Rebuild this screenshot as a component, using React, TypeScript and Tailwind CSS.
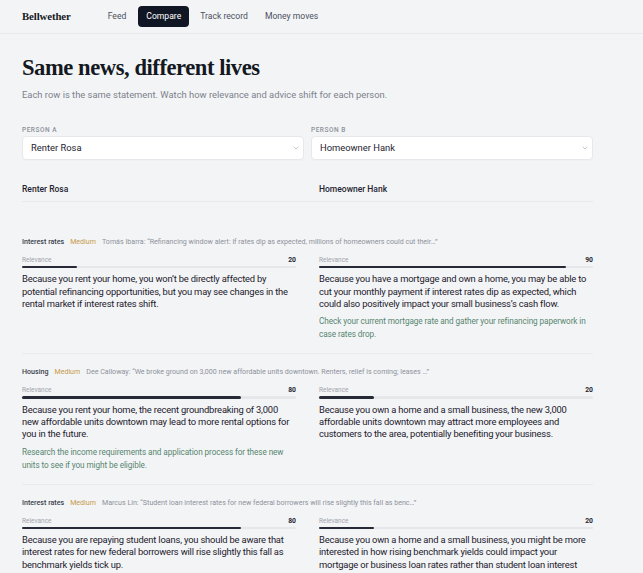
import React from "react";
import { ChevronDown } from "lucide-react";

type Side = { score: number; text: string; advice?: string };
type Row = { topic: string; level: string; quote: string; a: Side; b: Side };

const rows: Row[] = [
  {
    topic: "Interest rates",
    level: "Medium",
    quote:
      "Tomás Ibarra: \u201cRefinancing window alert: if rates dip as expected, millions of homeowners could cut their\u2026\u201d",
    a: {
      score: 20,
      text: "Because you rent your home, you won\u2019t be directly affected by potential refinancing opportunities, but you may see changes in the rental market if interest rates shift.",
    },
    b: {
      score: 90,
      text: "Because you have a mortgage and own a home, you may be able to cut your monthly payment if interest rates dip as expected, which could also positively impact your small business\u2019s cash flow.",
      advice: "Check your current mortgage rate and gather your refinancing paperwork in case rates drop.",
    },
  },
  {
    topic: "Housing",
    level: "Medium",
    quote:
      "Dee Calloway: \u201cWe broke ground on 3,000 new affordable units downtown. Renters, relief is coming; leases \u2026\u201d",
    a: {
      score: 80,
      text: "Because you rent your home, the recent groundbreaking of 3,000 new affordable units downtown may lead to more rental options for you in the future.",
      advice: "Research the income requirements and application process for these new units to see if you might be eligible.",
    },
    b: {
      score: 20,
      text: "Because you own a home and a small business, the new 3,000 affordable units downtown may attract more employees and customers to the area, potentially benefiting your business.",
    },
  },
  {
    topic: "Interest rates",
    level: "Medium",
    quote:
      "Marcus Lin: \u201cStudent loan interest rates for new federal borrowers will rise slightly this fall as benc\u2026\u201d",
    a: {
      score: 80,
      text: "Because you are repaying student loans, you should be aware that interest rates for new federal borrowers will rise slightly this fall as benchmark yields tick up.",
    },
    b: {
      score: 20,
      text: "Because you own a home and a small business, you might be more interested in how rising benchmark yields could impact your mortgage or business loan rates rather than student loan interest rates, which will rise slightly.",
    },
  },
];

const sans = "font-['Roboto','Inter','Liberation_Sans',sans-serif]";
const serif = "font-['Liberation_Serif','DejaVu_Serif',serif]";

function PersonSelect({ label, value }: { label: string; value: string }) {
  return (
    <div className="flex flex-col">
      <span className="text-[6.5px] font-medium uppercase tracking-[0.08em] text-[#8b9099] leading-[10px]">
        {label}
      </span>
      <div className="mt-[1px] flex h-[24px] items-center justify-between rounded-[4px] border border-[#e6e8eb] bg-white pl-[8px] pr-[3px] shadow-[0_1px_1px_rgba(0,0,0,0.02)]">
        <span className="text-[9.4px] text-[#1f2430]">{value}</span>
        <ChevronDown size={8} strokeWidth={1.5} className="text-[#8b9099]" />
      </div>
    </div>
  );
}

function Cell({ side }: { side: Side }) {
  return (
    <div className="flex flex-col">
      <div className="flex items-center justify-between leading-[10px]">
        <span className="text-[6.5px] text-[#a0a5ad]">Relevance</span>
        <span className="text-[6.8px] font-bold text-[#1f2430]">{side.score}</span>
      </div>
      <div className="mt-[1px] h-[2.5px] w-full rounded-full bg-[#e5e7eb]">
        <div className="h-full rounded-full bg-[#262a36]" style={{ width: `${side.score}%` }} />
      </div>
      <p className="mt-[5px] text-[9.4px] leading-[12.3px] text-[#1c202b] tracking-[-0.02em]">
        {side.text}
      </p>
      {side.advice && (
        <p className="mt-[5px] text-[8.2px] leading-[13px] text-[#56866f] tracking-[-0.01em]">
          {side.advice}
        </p>
      )}
    </div>
  );
}

export default function App() {
  return (
    <div className={`min-h-screen bg-[#f3f4f6] ${sans}`}>
      <header className="flex h-[34px] items-center border-b border-[#e7e9ec] pl-[22px]">
        <span className={`${serif} text-[10.8px] font-bold text-[#161a23] tracking-[-0.01em]`}>Bellwether</span>
        <nav className="flex items-center text-[8.6px] text-[#4b5160]">
          <span className="ml-[37px]">Feed</span>
          <span className="ml-[12px] rounded-[4px] bg-[#111624] px-[8px] py-[4.5px] text-white">Compare</span>
          <span className="ml-[11px]">Track record</span>
          <span className="ml-[17px]">Money moves</span>
        </nav>
      </header>

      <main className="w-[571px] ml-[22px] pt-[20px]">
        <h1 className={`${serif} text-[22.6px] font-bold leading-[28px] tracking-[-0.02em] text-[#141821]`}>
          Same news, different lives
        </h1>
        <p className="mt-[6px] text-[9.4px] text-[#7c818b]">
          Each row is the same statement. Watch how relevance and advice shift for each person.
        </p>

        <div className="mt-[23px] grid grid-cols-2 gap-[7px]">
          <PersonSelect label="Person A" value="Renter Rosa" />
          <PersonSelect label="Person B" value="Homeowner Hank" />
        </div>

        <div className="mt-[23px] grid grid-cols-2 gap-x-[23px] border-b border-[#e7e9ec] pb-[5px]">
          <span className="text-[8.5px] font-medium text-[#1f2430]">Renter Rosa</span>
          <span className="text-[8.5px] font-medium text-[#1f2430]">Homeowner Hank</span>
        </div>

        <div className="mt-[35px] flex flex-col">
          {rows.map((r, i) => (
            <section key={i} className={`pb-[12px] ${i > 0 ? "border-t border-[#e9ebee] pt-[13px]" : ""}`}>
              <div className="flex items-center gap-[6px] text-[7.1px] leading-[10px]">
                <span className="font-medium text-[#3a3f4b]">{r.topic}</span>
                <span className="text-[#c79a4a]">{r.level}</span>
                <span className="text-[#8d929b]">{r.quote}</span>
              </div>
              <div className="mt-[8px] grid grid-cols-2 gap-x-[23px]">
                <Cell side={r.a} />
                <Cell side={r.b} />
              </div>
            </section>
          ))}
        </div>
      </main>
    </div>
  );
}
